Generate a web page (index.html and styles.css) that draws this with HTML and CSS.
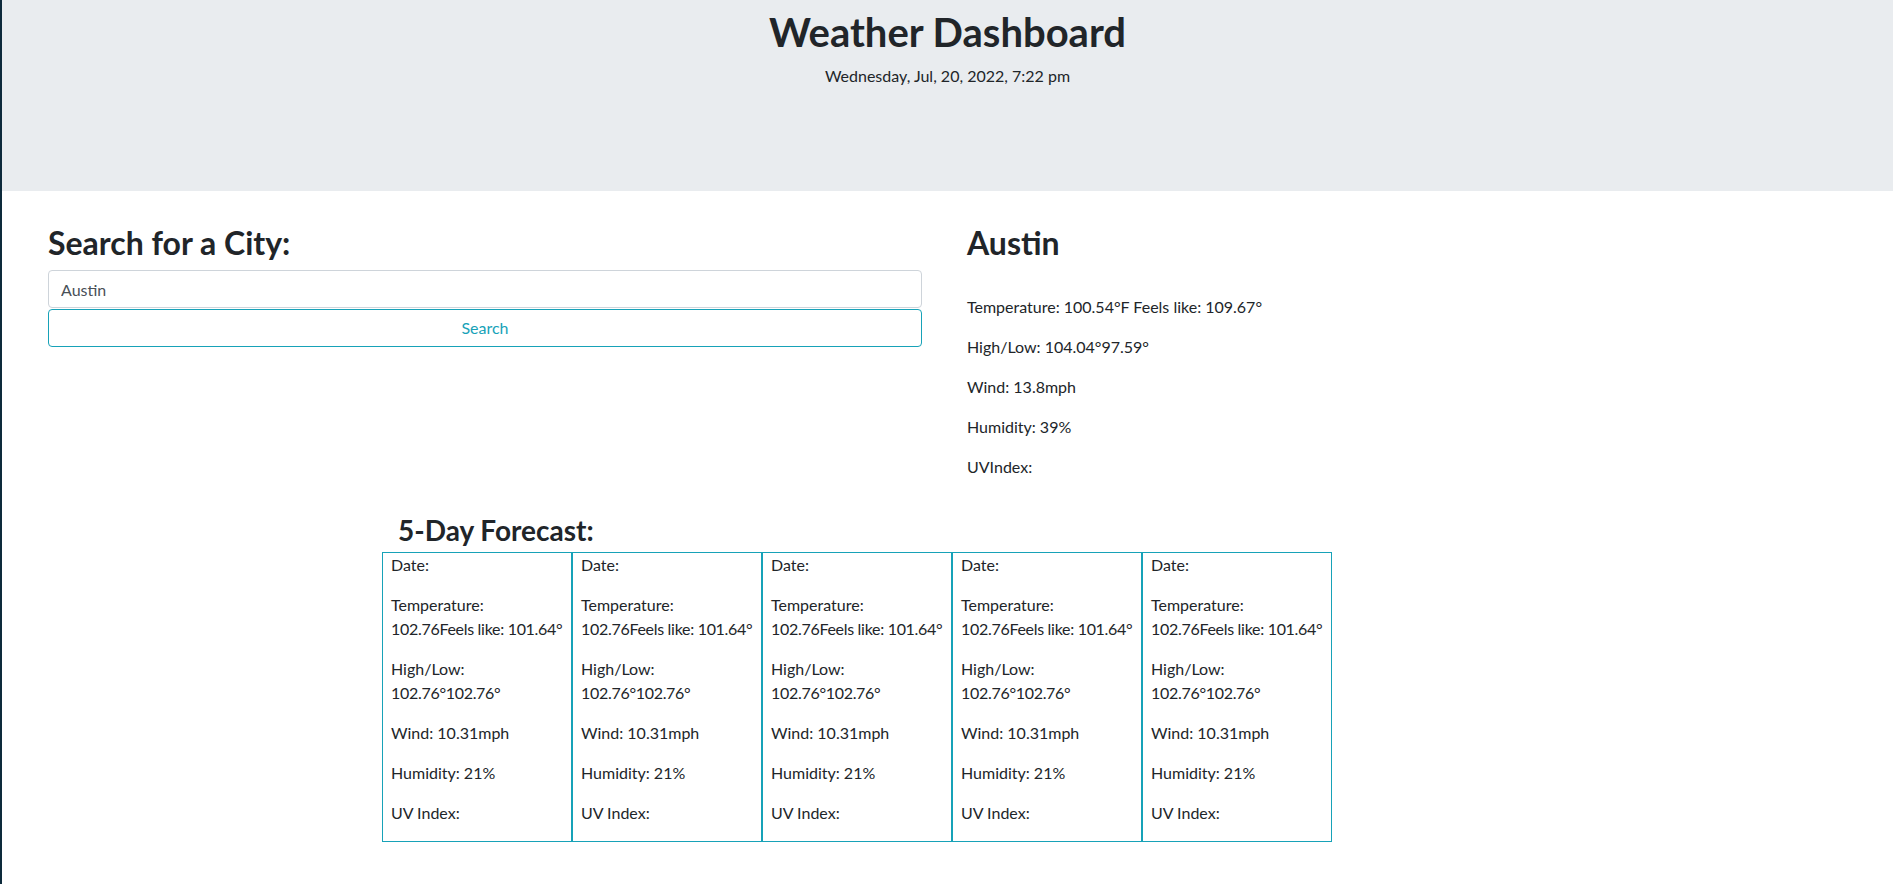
FILE: index.html
```html
<!DOCTYPE html>
<html lang="en">
<head>
<meta charset="utf-8">
<title>Weather Dashboard</title>
<link rel="stylesheet" href="styles.css">
</head>
<body>
<header class="jumbo">
  <h1 class="title">Weather Dashboard</h1>
  <p class="date">Wednesday, Jul, 20, 2022, 7:22 pm</p>
</header>
<main class="main">
  <div class="top-row">
    <section class="search">
      <h2 class="h2">Search for a City:</h2>
      <input class="city-input" type="text" value="Austin">
      <button class="search-btn" type="button">Search</button>
    </section>
    <section class="current">
      <h2 class="h2 city-name">Austin</h2>
      <p class="line">Temperature: 100.54°F Feels like: 109.67°</p>
      <p class="line">High/Low: 104.04°97.59°</p>
      <p class="line">Wind: 13.8mph</p>
      <p class="line">Humidity: 39%</p>
      <p class="line">UVIndex:</p>
    </section>
  </div>
  <section class="forecast">
    <h3 class="h3">5-Day Forecast:</h3>
    <div class="cards">
      <div class="card">
        <p class="line">Date:</p>
        <p class="line">Temperature: <span class="nw">102.76Feels like: 101.64°</span></p>
        <p class="line">High/Low: <span class="nw">102.76°102.76°</span></p>
        <p class="line">Wind: 10.31mph</p>
        <p class="line">Humidity: 21%</p>
        <p class="line">UV Index:</p>
      </div>
      <div class="card">
        <p class="line">Date:</p>
        <p class="line">Temperature: <span class="nw">102.76Feels like: 101.64°</span></p>
        <p class="line">High/Low: <span class="nw">102.76°102.76°</span></p>
        <p class="line">Wind: 10.31mph</p>
        <p class="line">Humidity: 21%</p>
        <p class="line">UV Index:</p>
      </div>
      <div class="card">
        <p class="line">Date:</p>
        <p class="line">Temperature: <span class="nw">102.76Feels like: 101.64°</span></p>
        <p class="line">High/Low: <span class="nw">102.76°102.76°</span></p>
        <p class="line">Wind: 10.31mph</p>
        <p class="line">Humidity: 21%</p>
        <p class="line">UV Index:</p>
      </div>
      <div class="card">
        <p class="line">Date:</p>
        <p class="line">Temperature: <span class="nw">102.76Feels like: 101.64°</span></p>
        <p class="line">High/Low: <span class="nw">102.76°102.76°</span></p>
        <p class="line">Wind: 10.31mph</p>
        <p class="line">Humidity: 21%</p>
        <p class="line">UV Index:</p>
      </div>
      <div class="card">
        <p class="line">Date:</p>
        <p class="line">Temperature: <span class="nw">102.76Feels like: 101.64°</span></p>
        <p class="line">High/Low: <span class="nw">102.76°102.76°</span></p>
        <p class="line">Wind: 10.31mph</p>
        <p class="line">Humidity: 21%</p>
        <p class="line">UV Index:</p>
      </div>
    </div>
  </section>
</main>
</body>
</html>
```

FILE: styles.css
```css
* { box-sizing: border-box; }
html, body { height: 100%; }
body {
  margin: 0;
  border-left: 2px solid #0d2a3b;
  font-family: Lato, "Open Sans", sans-serif;
  font-size: 16px;
  line-height: 1.5;
  color: #212529;
  background: #fff;
}
.jumbo {
  height: 191px;
  background: #e9ecef;
  padding-top: 8px;
  text-align: center;
}
.title {
  margin: 0 0 8px;
  font-size: 40px;
  line-height: 1.2;
  font-weight: 700;
}
.date {
  margin: 0;
  font-size: 16px;
  line-height: 24px;
}
.main {
  padding: 33px 0 0 46px;
}
.top-row {
  display: grid;
  grid-template-columns: 874px 1fr;
  column-gap: 45px;
}
.h2 {
  margin: 0 0 8px;
  font-size: 32px;
  line-height: 1.2;
  font-weight: 700;
}
.city-name { margin-bottom: 33px; }
.line {
  margin: 0 0 16px;
  line-height: 24px;
}
.city-input {
  display: block;
  width: 100%;
  height: 38px;
  padding: 6px 12px;
  font: inherit;
  color: #495057;
  border: 1px solid #ced4da;
  border-radius: 4px;
  background: #fff;
}
.search-btn {
  display: block;
  width: 100%;
  height: 38px;
  margin-top: 1px;
  font: inherit;
  color: #17a2b8;
  background: transparent;
  border: 1px solid #17a2b8;
  border-radius: 4px;
}
.forecast {
  margin: 19px 0 0 334px;
}
.h3 {
  margin: 0 0 4px 16px;
  font-size: 28px;
  line-height: 1.2;
  font-weight: 700;
}
.cards {
  display: flex;
  width: 950px;
}
.card {
  flex: 1 1 0;
  min-width: 0;
  border: 1px solid #17a2b8;
  padding: 0 8px;
}
.nw {
  white-space: nowrap;
  letter-spacing: -0.3px;
}
```
